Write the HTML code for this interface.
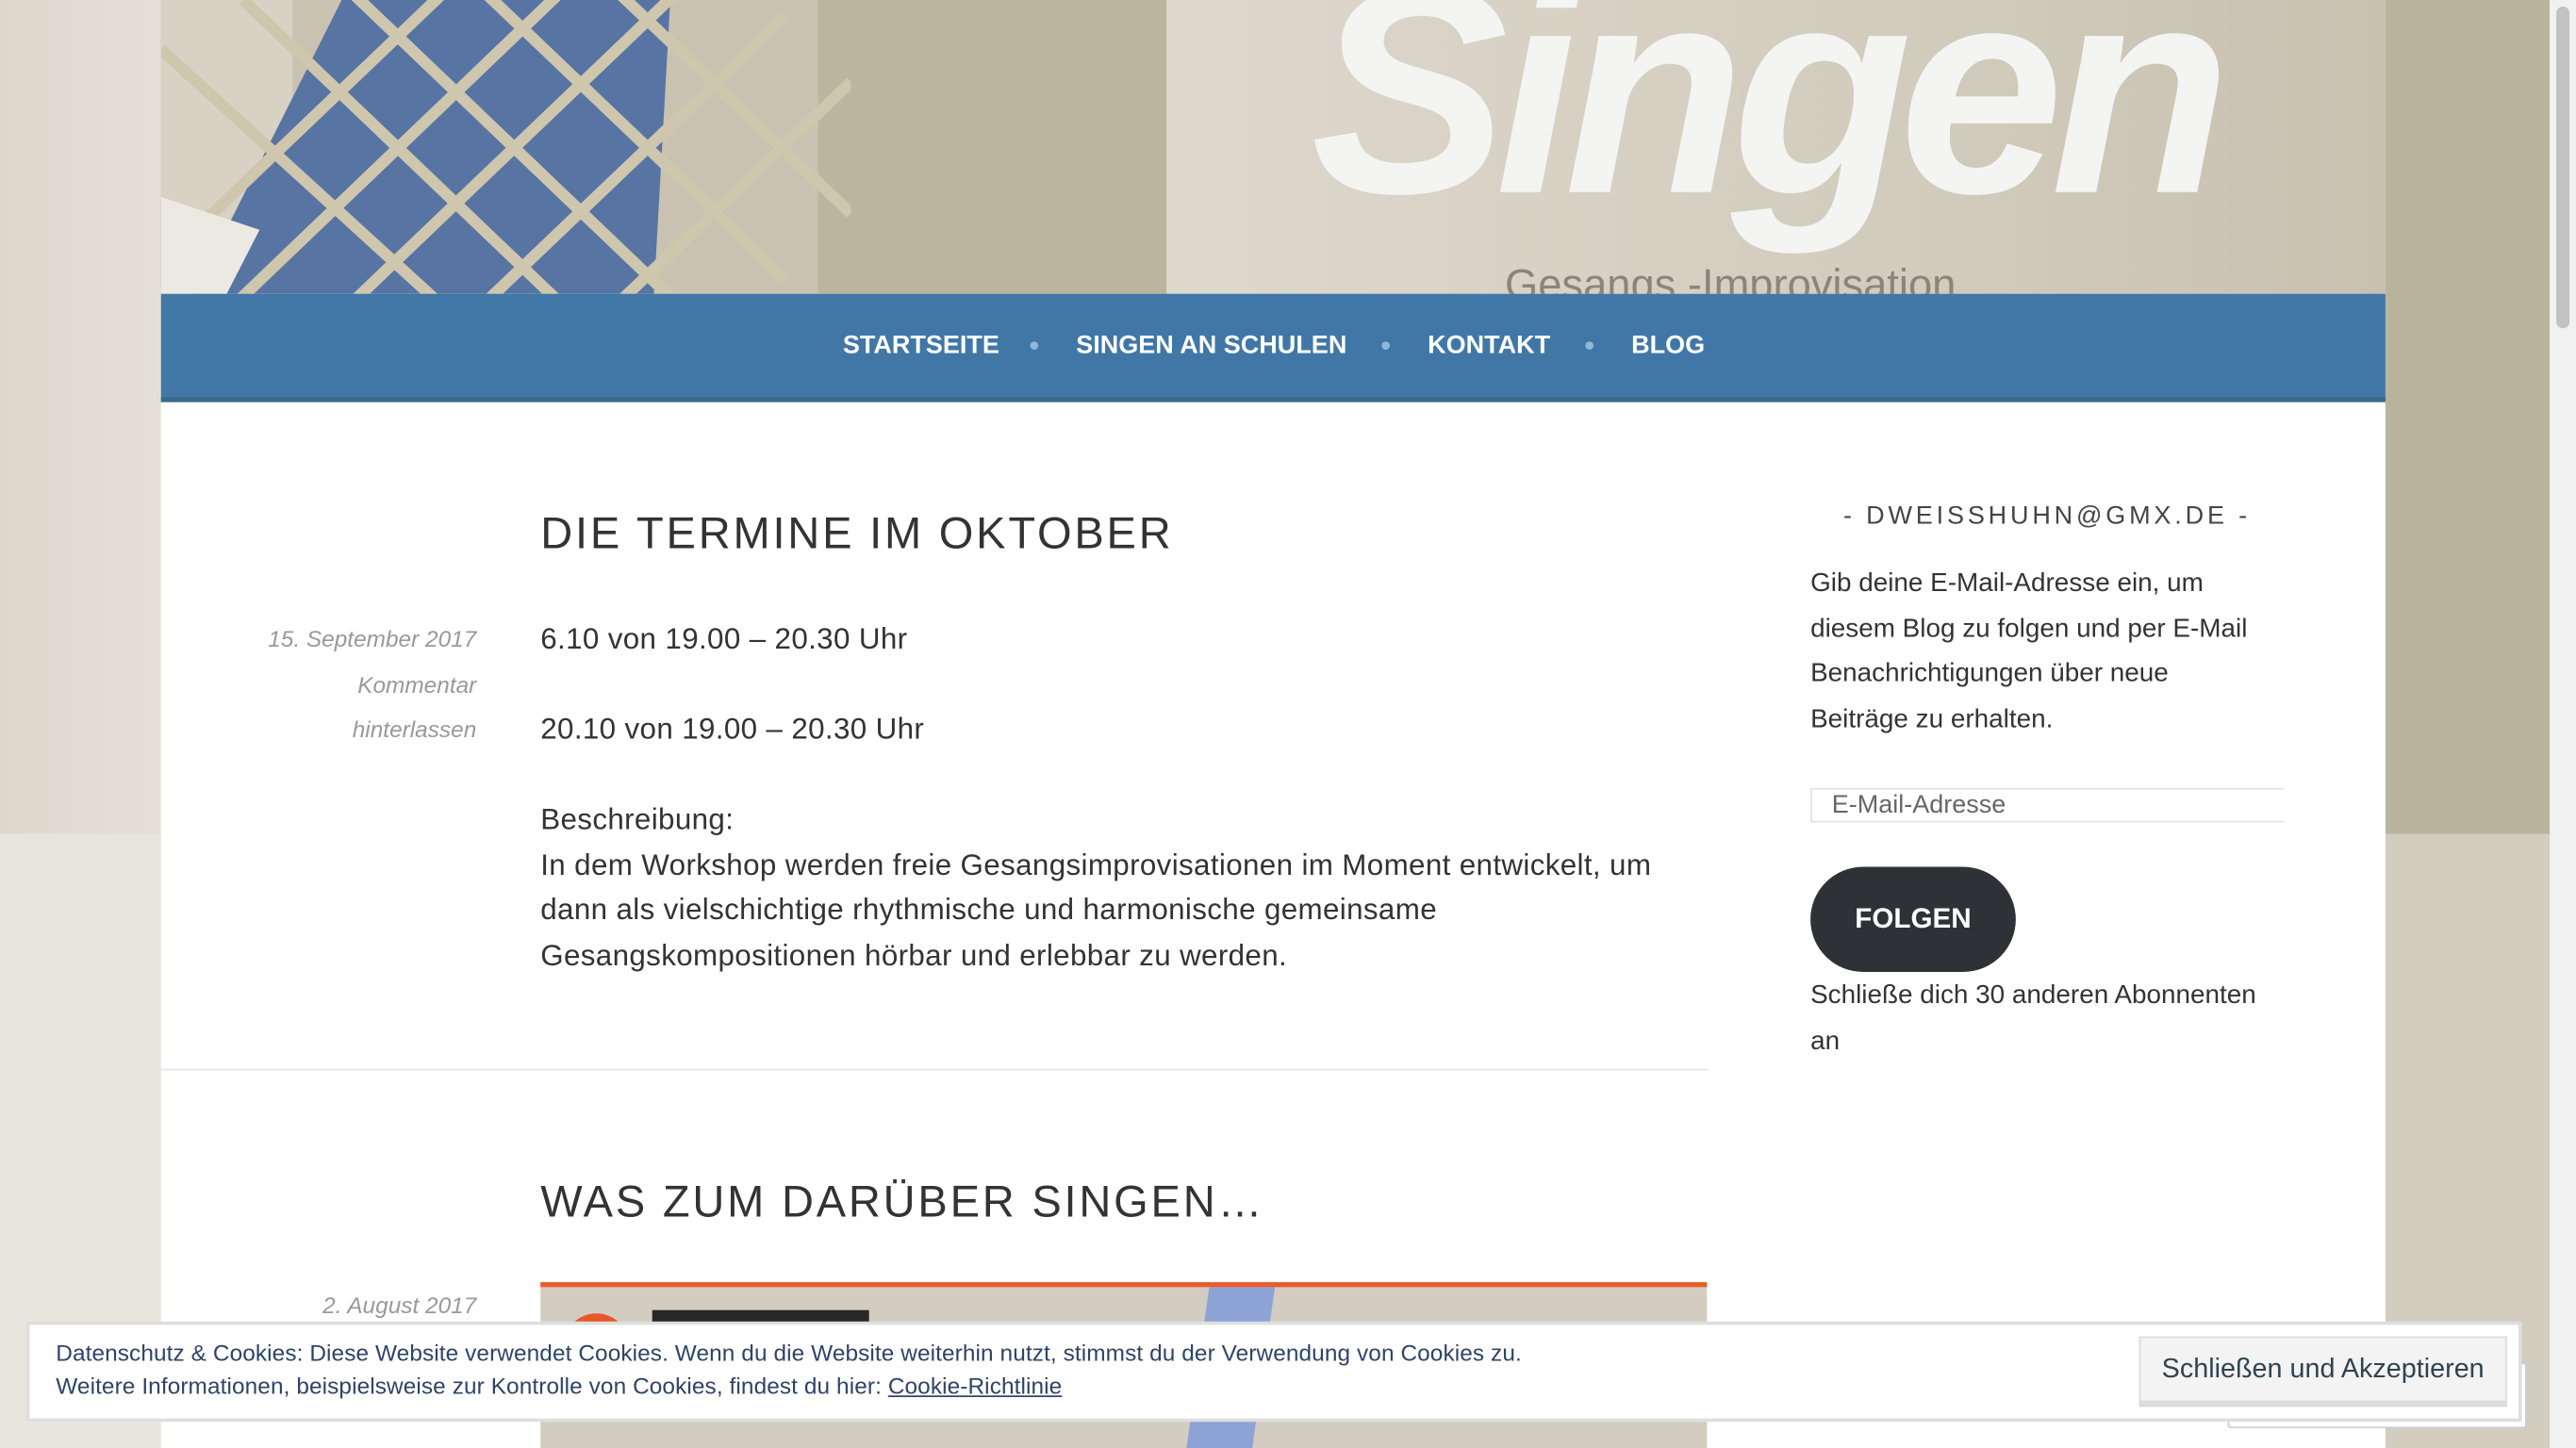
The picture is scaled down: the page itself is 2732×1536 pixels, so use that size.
<!DOCTYPE html>
<html><head><meta charset="utf-8"><style>
html,body{margin:0;padding:0;width:2732px;height:1536px;overflow:hidden;background:#e3dfd6}
#w{position:absolute;left:0;top:0;width:1568px;height:882px;transform:scale(1.74235,1.7415);transform-origin:0 0;font-family:"Liberation Sans",sans-serif;overflow:hidden}
.a{position:absolute;white-space:nowrap}
</style></head><body><div id="w">
<div class="a" style="left:0;top:0;width:98px;height:508px;background:linear-gradient(90deg,#ddd8cc,#e4e0d6)"></div>
<div class="a" style="left:0;top:508px;width:98px;height:374px;background:#e7e4dc"></div>
<div class="a" style="left:1452px;top:0;width:100px;height:508px;background:#bab39c"></div>
<div class="a" style="left:1452px;top:508px;width:100px;height:374px;background:#d2cdbe"></div>
<div class="a" style="left:1552px;top:0;width:16px;height:882px;background:#f1f1f1"></div>
<div class="a" style="left:1556px;top:4px;width:8px;height:196px;background:#c2c2c2;border-radius:4px"></div>
<!-- header image -->
<div class="a" style="left:98px;top:0;width:1354px;height:179px;background:#c9c2b0;overflow:hidden">
 <div class="a" style="left:0;top:0;width:80px;height:179px;background:#d8d2c4"></div>
 <div class="a" style="left:400px;top:0;width:212px;height:179px;background:#bbb49e"></div>
 <div class="a" style="left:612px;top:0;width:742px;height:179px;background:linear-gradient(90deg,#ddd8cc,#d2ccbe 60%,#c8c1b0)"></div>
 <svg class="a" style="left:0;top:0" width="420" height="179">
  <polygon points="110,0 310,0 300,179 20,179" fill="#5774a3"/>
  <g stroke="#cfc6ae" stroke-width="7">
   <line x1="100" y1="-20" x2="330" y2="200"/><line x1="50" y1="0" x2="280" y2="220"/><line x1="160" y1="-40" x2="380" y2="170"/><line x1="0" y1="30" x2="230" y2="240"/><line x1="220" y1="-60" x2="420" y2="130"/>
   <line x1="330" y1="-20" x2="100" y2="200"/><line x1="380" y1="10" x2="160" y2="220"/><line x1="280" y1="-40" x2="40" y2="190"/><line x1="230" y1="-60" x2="0" y2="160"/><line x1="420" y1="50" x2="220" y2="240"/>
  </g>
  <polygon points="0,120 60,140 40,179 0,179" fill="#ece9e2"/>
 </svg>
 <div class="a" style="left:700px;top:-48px;font:italic bold 180px 'Liberation Sans',sans-serif;color:#f4f4f3;letter-spacing:-8px">Singen</div>
 <div class="a" style="left:818px;top:158px;font:26px 'Liberation Sans',sans-serif;color:#8a8578">Gesangs -Improvisation</div>
</div>
<!-- nav -->
<div class="a" style="left:98px;top:179px;width:1354px;height:63px;background:#4077a6;border-bottom:3px solid #3a6889"></div>
<div class="a" style="left:513px;top:202px;font:bold 15.5px 'Liberation Sans',sans-serif;color:#fff">STARTSEITE</div>
<div class="a" style="left:627px;top:208px;width:5px;height:5px;border-radius:3px;background:#8fb7d8"></div>
<div class="a" style="left:655px;top:202px;font:bold 15.5px 'Liberation Sans',sans-serif;color:#fff">SINGEN AN SCHULEN</div>
<div class="a" style="left:841px;top:208px;width:5px;height:5px;border-radius:3px;background:#8fb7d8"></div>
<div class="a" style="left:869px;top:202px;font:bold 15.5px 'Liberation Sans',sans-serif;color:#fff">KONTAKT</div>
<div class="a" style="left:965px;top:208px;width:5px;height:5px;border-radius:3px;background:#8fb7d8"></div>
<div class="a" style="left:993px;top:202px;font:bold 15.5px 'Liberation Sans',sans-serif;color:#fff">BLOG</div>
<!-- content -->
<div class="a" style="left:98px;top:245px;width:1354px;height:637px;background:#fff"></div>
<div class="a" style="left:329px;top:310px;font:27px 'Liberation Sans',sans-serif;letter-spacing:1.6px;color:#333">DIE TERMINE IM OKTOBER</div>
<div class="a" style="left:120px;top:376px;width:170px;text-align:right;font:italic 14px/27.5px 'Liberation Sans',sans-serif;color:#999;white-space:normal">15. September 2017<br>Kommentar<br>hinterlassen</div>
<div class="a" style="left:329px;top:376px;font:18px/27.5px 'Liberation Sans',sans-serif;color:#333;letter-spacing:0.2px">6.10 von 19.00 – 20.30 Uhr<br><br>20.10 von 19.00 – 20.30 Uhr<br><br>Beschreibung:<br>In dem Workshop werden freie Gesangsimprovisationen im Moment entwickelt, um<br>dann als vielschichtige rhythmische und harmonische gemeinsame<br>Gesangskompositionen hörbar und erlebbar zu werden.</div>
<div class="a" style="left:98px;top:651px;width:942px;height:1px;background:#e8e8e8"></div>
<div class="a" style="left:329px;top:717px;font:27px 'Liberation Sans',sans-serif;letter-spacing:1.6px;color:#333">WAS ZUM DARÜBER SINGEN…</div>
<div class="a" style="left:120px;top:787px;width:170px;text-align:right;font:italic 14px 'Liberation Sans',sans-serif;color:#999">2. August 2017</div>
<div class="a" style="left:329px;top:781px;width:710px;height:101px;background:#d3ccc0;border-top:3px solid #ec5a2a;overflow:hidden">
 <div class="a" style="left:14px;top:16px;width:40px;height:40px;border-radius:20px;background:#e8582a"></div>
 <div class="a" style="left:68px;top:14px;width:132px;height:20px;background:#2a2826"></div>
 <div class="a" style="left:400px;top:0;width:40px;height:100px;background:#8da3d6;transform:skewX(-8deg)"></div>
</div>
<!-- sidebar -->
<div class="a" style="left:1102px;top:306px;width:288px;text-align:center;font:15.5px 'Liberation Sans',sans-serif;letter-spacing:2.2px;color:#444">- DWEISSHUHN@GMX.DE -</div>
<div class="a" style="left:1102px;top:342px;font:16px/27.5px 'Liberation Sans',sans-serif;color:#333">Gib deine E-Mail-Adresse ein, um<br>diesem Blog zu folgen und per E-Mail<br>Benachrichtigungen über neue<br>Beiträge zu erhalten.</div>
<div class="a" style="left:1102px;top:480px;width:288px;height:21px;border:1px solid #e3e3e3;border-right:none;box-sizing:border-box;font:15.5px/19px 'Liberation Sans',sans-serif;color:#666;padding-left:12px">E-Mail-Adresse</div>
<div class="a" style="left:1102px;top:528px;width:125px;height:64px;border-radius:32px;background:#2e3237;color:#fff;font:bold 17px/64px 'Liberation Sans',sans-serif;text-align:center">FOLGEN</div>
<div class="a" style="left:1102px;top:593px;font:16px/27.5px 'Liberation Sans',sans-serif;color:#333">Schließe dich 30 anderen Abonnenten<br>an</div>
<!-- cookie -->
<div class="a" style="left:1356px;top:830px;width:180px;height:38px;background:#fff;border:1px solid #ccd;border-radius:2px"></div>
<div class="a" style="left:16px;top:805px;width:1519px;height:61px;background:#fff;border:2px solid #dedede;box-sizing:border-box"></div>
<div class="a" style="left:34px;top:814px;font:14px/20px 'Liberation Sans',sans-serif;color:#2e4467;letter-spacing:0.05px">Datenschutz &amp; Cookies: Diese Website verwendet Cookies. Wenn du die Website weiterhin nutzt, stimmst du der Verwendung von Cookies zu.<br>Weitere Informationen, beispielsweise zur Kontrolle von Cookies, findest du hier: <span style="text-decoration:underline">Cookie-Richtlinie</span></div>
<div class="a" style="left:1302px;top:814px;width:224px;height:43px;background:#f3f3f3;border:1px solid #ddd;border-bottom:4px solid #dcdcdc;box-sizing:border-box;font:16.5px/38px 'Liberation Sans',sans-serif;color:#2e4453;text-align:center">Schließen und Akzeptieren</div>
</div></body></html>
